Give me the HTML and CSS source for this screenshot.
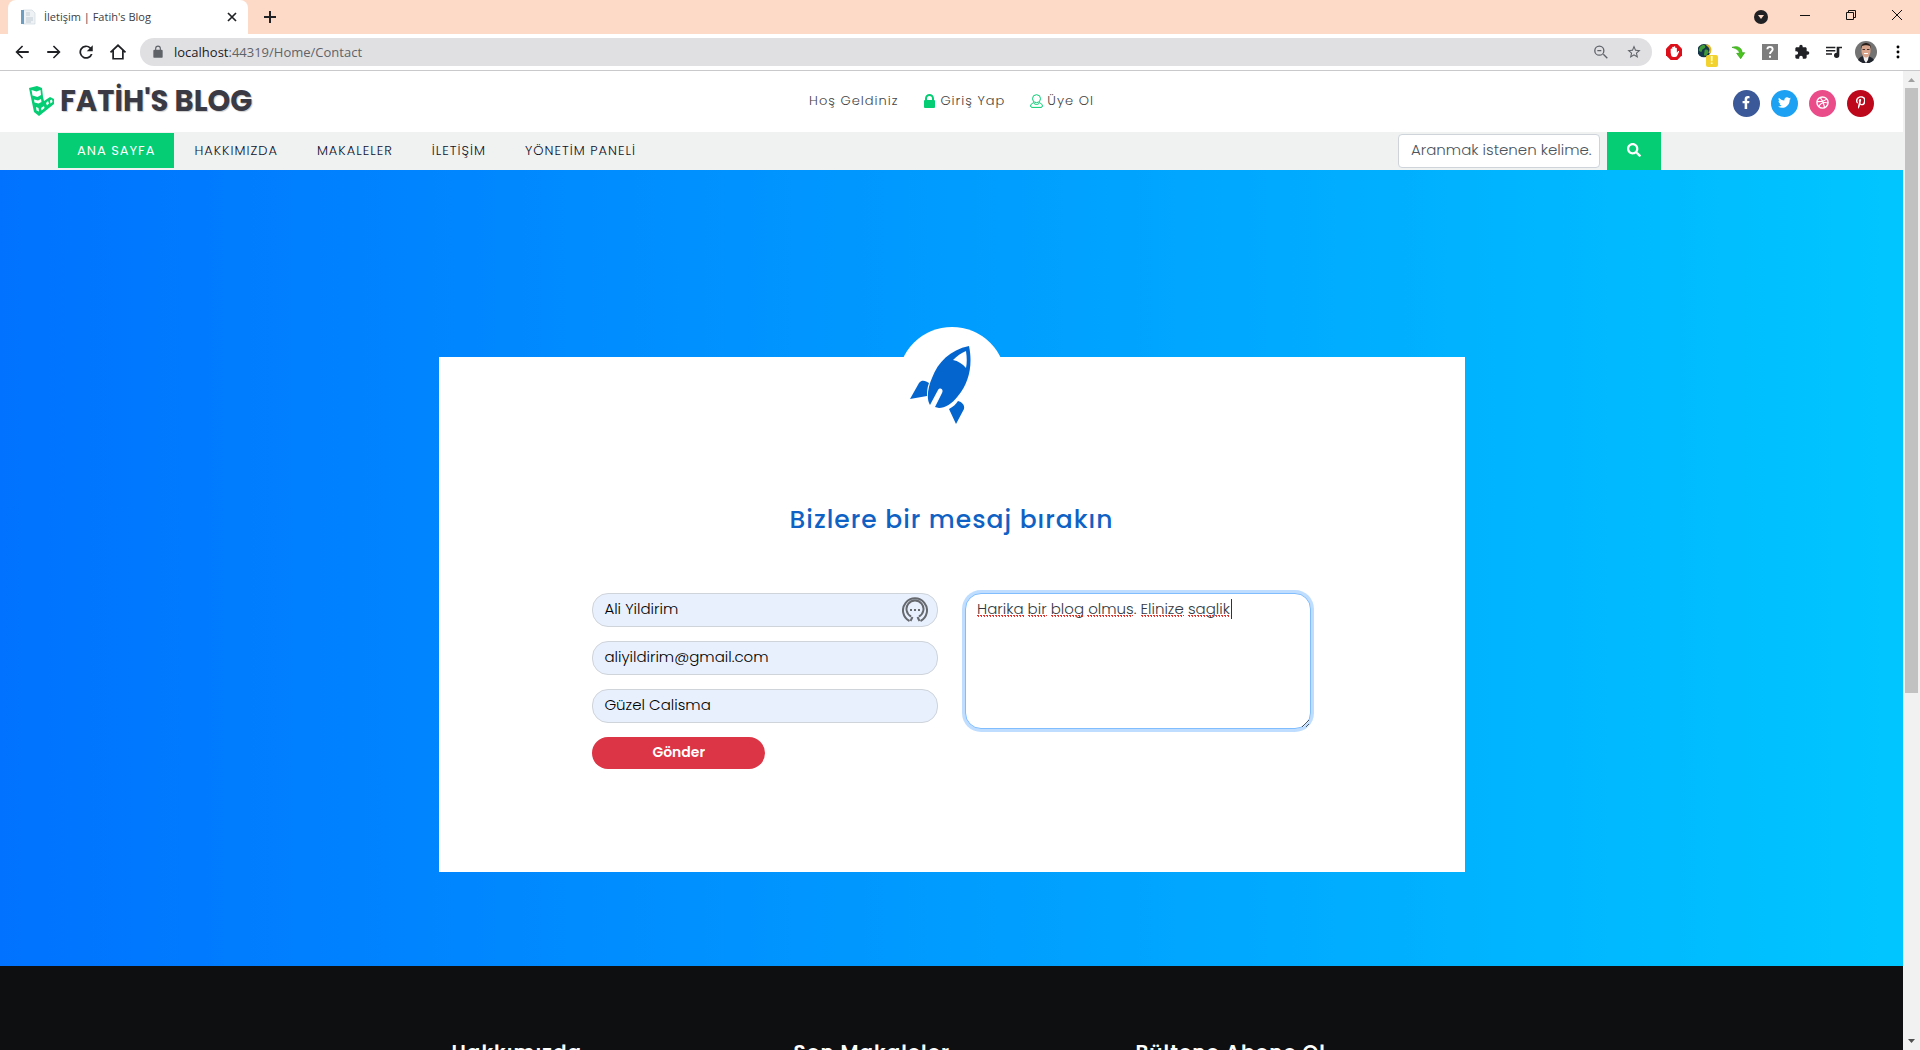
FILE: index.html
```html
<!DOCTYPE html>
<html lang="tr">
<head>
<meta charset="utf-8">
<meta name="viewport" content="width=device-width, initial-scale=1">
<title>İletişim | Fatih's Blog</title>
<link rel="stylesheet" href="styles.css">
</head>
<body class="window">
<div class="tabstrip">
  <div class="tab">
    <svg class="tab-icon" viewBox="0 0 16 16"><path d="M3 1h9l3 3v11H3z" fill="#eef2f5" stroke="#c9d3da" stroke-width=".6"/><path d="M1 1h3v14H1z" fill="#6d9dc0"/><path d="M6 4h4M6 6h4M6 9h7M6 11h7M6 13h5" stroke="#b4c1ca" stroke-width=".8"/></svg>
    <span class="tab-title">İletişim | Fatih's Blog</span>
    <button class="icon-btn tab-close" aria-label="Sekmeyi kapat"><svg viewBox="0 0 10 10"><path d="M1 1l8 8M9 1L1 9" stroke="#202124" stroke-width="1.7"/></svg></button>
  </div>
  <button class="icon-btn new-tab" aria-label="Yeni sekme"><svg viewBox="0 0 12 12"><path d="M6 0v12M0 6h12" stroke="#202124" stroke-width="2"/></svg></button>
  <div class="window-controls">
    <button class="icon-btn tab-search" aria-label="Sekmelerde ara"><svg viewBox="0 0 14 14"><circle cx="7" cy="7" r="7" fill="#202124"/><path d="M4 5h6L7 9z" fill="#fcdac7"/></svg></button>
    <button class="icon-btn control" aria-label="Küçült"><svg viewBox="0 0 10 10"><path d="M0 5.5h10" stroke="#111"/></svg></button>
    <button class="icon-btn control" aria-label="Geri yükle"><svg viewBox="0 0 10 10"><path d="M.5 2.500h7v7h-7zM2.500 2.500v-2h7v7h-2" fill="none" stroke="#111"/></svg></button>
    <button class="icon-btn control" aria-label="Kapat"><svg viewBox="0 0 10 10"><path d="M0 0l10 10M10 0L0 10" stroke="#111"/></svg></button>
  </div>
</div>
<div class="toolbar">
  <div class="tools nav-tools">
    <button class="icon-btn tool" aria-label="Geri"><svg viewBox="0 0 24 24"><path d="M21 10.800H7.500l6-6L12 3.200 3.200 12l8.800 8.800 1.500-1.600-6-6H21z" fill="#202124"/></svg></button>
    <button class="icon-btn tool" aria-label="İleri"><svg viewBox="0 0 24 24"><path d="M3 10.800h13.500l-6-6L12 3.200l8.800 8.800-8.800 8.800-1.500-1.600 6-6H3z" fill="#202124"/></svg></button>
    <button class="icon-btn tool" aria-label="Yenile"><svg viewBox="0 0 24 24"><path d="M18.300 5.700A8.900 8.900 0 1 0 20.700 14.500h-2.400A6.600 6.600 0 1 1 16.700 7.300L13 11h8V3z" fill="#202124"/></svg></button>
    <button class="icon-btn tool" aria-label="Ana sayfa"><svg viewBox="0 0 24 24"><path d="M2 12.500L12 3l10 9.500M5.500 10v11h13V10" fill="none" stroke="#202124" stroke-width="2.300"/></svg></button>
  </div>
  <div class="omnibox">
    <svg class="lock" viewBox="0 0 24 24"><path d="M18 8h-1V6A5 5 0 0 0 7 6v2H6a2 2 0 0 0-2 2v10a2 2 0 0 0 2 2h12a2 2 0 0 0 2-2V10a2 2 0 0 0-2-2zM9 8V6a3 3 0 0 1 6 0v2z" fill="#5f6368"/></svg>
    <span class="url"><span class="url-host">localhost</span>:44319/Home/Contact</span>
    <button class="icon-btn tool" aria-label="Uzaklaştır"><svg viewBox="0 0 24 24"><path d="M15.500 15.500l6 6M6.500 10h6" stroke="#5f6368" stroke-width="2"/><circle cx="9.500" cy="10" r="6.800" fill="none" stroke="#5f6368" stroke-width="2"/></svg></button>
    <button class="icon-btn tool" aria-label="Yer işareti ekle"><svg viewBox="0 0 24 24"><path d="M22 9.240l-7.190-.62L12 2 9.190 8.630 2 9.240l5.460 4.730L5.820 21 12 17.270 18.180 21l-1.630-7.030zM12 15.400l-3.760 2.270 1-4.280-3.320-2.880 4.380-.38L12 6.100l1.710 4.040 4.380.38-3.320 2.880 1 4.280z" fill="#5f6368"/></svg></button>
  </div>
  <div class="tools">
    <button class="icon-btn tool" aria-label="Reklam engelleyici"><svg viewBox="0 0 24 24"><path d="M7 0h10l7 7v10l-7 7H7l-7-7V7z" fill="#dc0f1a"/><path d="M7 13V7.500a1.200 1.200 0 0 1 2.300 0V11V5a1.200 1.200 0 0 1 2.300 0v5V4.500a1.200 1.200 0 0 1 2.400 0V11V6.500a1.200 1.200 0 0 1 2.300 0V13l1.700-2c1-.8 2 0 1.500 1l-3 6c-1 2-7 2.500-8.500-.5z" fill="#fff"/></svg></button>
    <button class="icon-btn tool globe" aria-label="İndirme yöneticisi"><svg viewBox="0 0 24 24"><circle cx="9" cy="10" r="10" fill="#15364a"/><path d="M3 4c4-4 8-3 8 0s-5 3-5 6-4 2-5-1zM10 9c4-2 7 1 5 5s-5 5-6 2z" fill="#3f9a38"/><path d="M13 1c6 3 7 8 4 13" fill="none" stroke="#e0b826" stroke-width="3"/></svg><span class="badge">!</span></button>
    <button class="icon-btn tool" aria-label="İndir"><svg viewBox="0 0 24 24"><path d="M3 5c9-3 15 1 15 8h4l-6 9-6-8h4c0-4-4-7-11-9z" fill="#4bc51d" stroke="#2d9d16"/></svg></button>
    <button class="icon-btn tool" aria-label="Yardım"><svg viewBox="0 0 24 24"><path d="M0 0h24v24H0z" fill="#7d7d7d"/><path d="M8 8c0-5 8-5 8 0 0 3.500-4 3-4 7" fill="none" stroke="#fff" stroke-width="2.800"/><path d="M10.500 17.500h3v3h-3z" fill="#fff"/></svg></button>
    <button class="icon-btn tool" aria-label="Uzantılar"><svg viewBox="0 0 24 24"><path d="M20.500 11H19V7c0-1.100-.9-2-2-2h-4V3.500a2.500 2.500 0 0 0-5 0V5H4c-1.100 0-2 .9-2 2v3.800h1.500a2.700 2.700 0 0 1 0 5.400H2V20c0 1.100.9 2 2 2h3.800v-1.500a2.700 2.700 0 0 1 5.400 0V22H17c1.100 0 2-.9 2-2v-4h1.500a2.500 2.500 0 0 0 0-5z" fill="#202124"/></svg></button>
    <button class="icon-btn tool" aria-label="Medya"><svg viewBox="0 0 24 24"><path d="M0 4h14v2.300H0zM0 9h14v2.300H0zM0 14h9v2.300H0zM16 4h8v2.500h-4V17a4 4 0 1 1-4-4z" fill="#202124"/></svg></button>
    <button class="icon-btn tool avatar" aria-label="Profil"><svg viewBox="0 0 22 22"><circle cx="11" cy="11" r="11" fill="#737373"/><path d="M3 19c2-4 5-4 8-4s6 1 8 4a11 11 0 0 1-16 0z" fill="#20242c"/><path d="M8 14h6l-1 5-2 3-2-3z" fill="#f3f1f0"/><path d="M6.500 6c0-5 9-5 9 0v4c0 4-2.500 6.500-4.500 6.500S6.500 14 6.500 10z" fill="#d9a68d"/><path d="M6 8c-1-8 11-8 10 0l-1-3c-2-1-6-1-8 0z" fill="#29201c"/><path d="M7.500 8.500H10M12 8.500h2.500" stroke="#4a302a"/><path d="M9 12.500h4" stroke="#fff"/></svg></button>
    <button class="icon-btn tool" aria-label="Menü"><svg viewBox="0 0 24 24"><circle cx="12" cy="4.500" r="2.200"/><circle cx="12" cy="12" r="2.200"/><circle cx="12" cy="19.500" r="2.200"/></svg></button>
  </div>
</div>
<div class="viewport">
  <div class="page">
    <header class="site-header">
      <a class="logo" href="#">
        <svg class="logo-icon" viewBox="0 0 26 30"><path d="M0 2l8-2 5 2 1 9 1 4 6-4 4 2v5L10 30l-5-4z" fill="#04cd73"/><path d="M2.500 4l5 1.500 4-1.500.5 5-3.500 2-5-1.500zM5 13.500l4 1 3-1.500.5 3-3 1.500-4-1zM17 17l2-2 1 2.500-2 2zM21 14.500l2-1 .5 2.500-2 1.500zM12 22l3-2 .5 2-3 2.500zM7 21l2.500 1 .5 3.500-2.500-1z" fill="#fff"/></svg>
        <span class="logo-text">FATİH'S BLOG</span>
      </a>
      <div class="account">
        <span>Hoş Geldiniz</span>
        <a class="account-link" href="#"><svg class="account-icon" viewBox="0 0 13 14"><path d="M3 6V4.500a3.500 3.500 0 0 1 7 0V6" fill="none" stroke="#04cd73" stroke-width="2"/><rect x="1" y="6" width="11" height="8" rx="1" fill="#04cd73"/></svg>Giriş Yap</a>
        <a class="account-link" href="#"><svg class="account-icon" viewBox="0 0 13 14"><path d="M4 8.500C1 10 .6 10.500.6 12c0 .9.600 1.400 1.400 1.400h9c.8 0 1.400-.5 1.400-1.400 0-1.500-.4-2-3.400-3.500M4 9.500c1.500 1.300 3.500 1.300 5 0" fill="none" stroke="#04cd73"/><circle cx="6.500" cy="4.700" r="4" fill="none" stroke="#04cd73"/></svg>Üye Ol</a>
      </div>
      <div class="social">
        <a class="social-link facebook" href="#" aria-label="Facebook"><svg viewBox="0 0 320 512"><path d="M279.140 288l14.220-92.660h-88.910v-60.130c0-25.350 12.420-50.060 52.240-50.060h40.420V6.260S260.430 0 225.360 0c-73.220 0-121.080 44.380-121.080 124.720v70.620H22.890V288h81.390v224h100.170V288z"/></svg></a>
        <a class="social-link twitter" href="#" aria-label="Twitter"><svg viewBox="0 0 512 512"><path d="M459.370 151.716c.325 4.548.325 9.097.325 13.645 0 138.720-105.583 298.558-298.558 298.558-59.452 0-114.680-17.219-161.137-47.106 8.447.974 16.568 1.299 25.340 1.299 49.055 0 94.213-16.568 130.274-44.832-46.132-.975-84.792-31.188-98.112-72.772 6.498.974 12.995 1.624 19.818 1.624 9.421 0 18.843-1.300 27.614-3.573-48.081-9.747-84.143-51.980-84.143-102.985v-1.299c13.969 7.797 30.214 12.670 47.431 13.319-28.264-18.843-46.781-51.005-46.781-87.391 0-19.492 5.197-37.360 14.294-52.954 51.655 63.675 129.300 105.258 216.365 109.807-1.624-7.797-2.599-15.918-2.599-24.040 0-57.828 46.782-104.934 104.934-104.934 30.213 0 57.502 12.670 76.670 33.137 23.715-4.548 46.456-13.320 66.599-25.340-7.798 24.366-24.366 44.833-46.132 57.827 21.117-2.273 41.584-8.122 60.426-16.243-14.292 20.791-32.161 39.308-52.628 54.253z"/></svg></a>
        <a class="social-link dribbble" href="#" aria-label="Dribbble"><svg viewBox="0 0 14 14"><path d="M4.500 1.500c2.500 3 4 6.500 4.800 11M1 6c4 .3 8-.5 10.500-3M2.700 11.500C5 7.500 9 6.300 13 7.500" fill="none" stroke="#fff" stroke-width="1.200"/><circle cx="7" cy="7" r="6" fill="none" stroke="#fff" stroke-width="1.500"/></svg></a>
        <a class="social-link pinterest" href="#" aria-label="Pinterest"><svg viewBox="0 0 384 512"><path d="M204 6.500C101.400 6.500 0 74.900 0 185.600 0 256 39.600 296 63.600 296c9.900 0 15.600-27.600 15.600-35.400 0-9.300-23.700-29.100-23.700-67.800 0-80.400 61.200-137.400 140.400-137.400 68.100 0 118.500 38.700 118.500 109.800 0 53.100-21.300 152.700-90.300 152.700-24.900 0-46.200-18-46.200-43.800 0-37.800 26.400-74.400 26.400-113.400 0-66.200-93.900-54.200-93.900 25.800 0 16.800 2.100 35.400 9.600 50.700-13.800 59.400-42 147.900-42 209.100 0 18.900 2.700 37.500 4.500 56.400 3.400 3.800 1.700 3.400 6.900 1.500 50.400-69 48.600-82.500 71.400-172.800 12.300 23.400 44.100 36 69.300 36 106.200 0 153.900-103.500 153.900-196.800C384 71.300 298.200 6.500 204 6.500z"/></svg></a>
      </div>
    </header>
    <nav class="site-nav">
      <div class="menu">
        <a class="menu-link active" href="#">ANA SAYFA</a>
        <a class="menu-link" href="#">HAKKIMIZDA</a>
        <a class="menu-link" href="#">MAKALELER</a>
        <a class="menu-link" href="#">İLETİŞİM</a>
        <a class="menu-link" href="#">YÖNETİM PANELİ</a>
      </div>
      <form class="search">
        <input class="search-input" type="text" placeholder="Aranmak istenen kelime.." aria-label="Ara">
        <button class="search-btn" type="button" aria-label="Ara"><svg viewBox="0 0 512 512"><path d="M505 442.700L405.300 343c-4.500-4.500-10.600-7-17-7H372c27.600-35.300 44-79.700 44-128C416 93.100 322.900 0 208 0S0 93.100 0 208s93.100 208 208 208c48.300 0 92.700-16.400 128-44v16.300c0 6.400 2.500 12.500 7 17l99.700 99.700c9.400 9.400 24.600 9.400 33.900 0l28.300-28.300c9.400-9.400 9.400-24.600.1-34zM208 336c-70.700 0-128-57.200-128-128 0-70.700 57.200-128 128-128 70.700 0 128 57.200 128 128 0 70.700-57.200 128-128 128z" fill="#fff"/></svg></button>
      </form>
    </nav>
    <main class="hero">
      <section class="card">
        <div class="rocket-disc"><svg class="rocket" viewBox="0 0 62 78"><path d="M59 0c4 19 0 37-11 50-6 8-13 12-19 12l-4-1 7-14c2-4-2-6-4-3l-8 15c-4-6-2-18 2-27C28 16 40 4 59 0z" fill="#0565cf"/><path d="M56 5c1 7 1 12 0 17-3-4-8-7-13-8 4-4 8-7 13-9z" fill="#fff"/><path d="M0 53l9-16c3-4 7-2 10 0-2 5-2 9-2 13zM39 63c4-2 7-5 9-8 4 1 7 4 6 8l-8 15z" fill="#0565cf"/></svg></div>
        <h1 class="card-title">Bizlere bir mesaj bırakın</h1>
        <form class="contact-form">
          <div class="fields">
            <div class="field">
              <input class="control-box" type="text" value="Ali Yildirim" aria-label="Ad Soyad">
              <svg class="pass-icon" viewBox="0 0 26 26"><path d="M7.500 24a12 12 0 1 1 11 0M9 19.500a8.500 8.500 0 1 1 8 0" fill="none" stroke="#66696e" stroke-width="2"/><path d="M8.500 24l2-4M17.500 24l-2-4" stroke="#66696e" stroke-width="2"/><path d="M8 13h2M12 13h2M16 13h2" stroke="#66696e" stroke-width="2"/></svg>
            </div>
            <input class="control-box" type="email" value="aliyildirim@gmail.com" aria-label="E-posta">
            <input class="control-box" type="text" value="Güzel Calisma" aria-label="Konu">
            <button class="send-btn" type="button">Gönder</button>
          </div>
          <div class="message">
            <textarea class="control-box message-box" aria-label="Mesaj" spellcheck="false">Harika bir blog olmus. Elinize saglik</textarea>
            <svg class="proof-marks" viewBox="0 0 260 24"><path d="M0 18.500h47M51 18.500h19M74 18.500h32M110 18.500h46M164 18.500h43M211 18.500h42" stroke="#e0362f" stroke-width="1" stroke-dasharray="2 1" fill="none"/><path d="M1 19.500h46M52 19.500h18M75 19.500h31M111 19.500h45M165 19.500h42M212 19.500h41" stroke="#e0362f" stroke-width="1" stroke-dasharray="1 2" fill="none"/><path d="M254.500 2v20" stroke="#333"/></svg>
          </div>
        </form>
      </section>
    </main>
    <footer class="site-footer">
      <h2 class="footer-title">Hakkımızda</h2>
      <h2 class="footer-title">Son Makaleler</h2>
      <h2 class="footer-title">Bültene Abone Ol</h2>
    </footer>
  </div>
  <div class="scrollbar">
    <svg class="scroll-arrow" viewBox="0 0 17 17"><path d="M5 11h7L8.500 7z" fill="#a0a0a0"/></svg>
    <div class="scroll-track"><div class="scroll-thumb"></div></div>
    <svg class="scroll-arrow" viewBox="0 0 17 17"><path d="M5 6h7l-3.500 4z" fill="#505050"/></svg>
  </div>
</div>
</body>
</html>
```

FILE: styles.css
```css
* { box-sizing: border-box; }
.window {
  margin: 0;
  height: 100vh;
  display: flex;
  flex-direction: column;
  overflow: hidden;
  font-family: Poppins, Inter, sans-serif;
  font-size: 15px;
  font-weight: 300;
  color: #495057;
}
a { color: inherit; text-decoration: none; }
svg { display: block; }
.icon-btn {
  display: grid;
  place-items: center;
  padding: 0;
  border: 0;
  background: none;
}

/* Browser frame */
.tabstrip {
  display: flex;
  align-items: center;
  flex: none;
  height: 34px;
  padding-left: 8px;
  background: #fcdac7;
}
.tab {
  display: flex;
  align-items: center;
  gap: 8px;
  width: 240px;
  height: 34px;
  padding: 0 10px 0 12px;
  border-radius: 8px 8px 0 0;
  background: #fff;
}
.tab-icon { width: 16px; height: 16px; }
.tab-title {
  flex: 1;
  font: 11px/16px "Open Sans", sans-serif;
  color: #3c4043;
}
.tab-close svg { width: 10px; height: 10px; }
.tab-close { width: 12px; height: 16px; }
.new-tab { width: 44px; height: 34px; }
.new-tab svg { width: 12px; height: 12px; }
.window-controls {
  display: flex;
  align-items: center;
  height: 34px;
  margin-left: auto;
}
.tab-search { margin-right: 14px; }
.tab-search svg { width: 14px; height: 14px; }
.control { align-self: flex-start; width: 46px; height: 30px; }
.control svg { width: 10px; height: 10px; }
.toolbar {
  display: flex;
  align-items: center;
  gap: 10px;
  flex: none;
  height: 37px;
  padding: 0 10px;
  border-bottom: 1px solid #c9c9cb;
  background: #fff;
}
.tools { display: flex; gap: 8px; }
.tool { width: 24px; height: 24px; }
.tool svg { width: 16px; height: 16px; }
.nav-tools svg { width: 18px; height: 18px; }
.avatar svg { width: 22px; height: 22px; }
.globe { position: relative; }
.badge {
  position: absolute;
  right: 0;
  bottom: -3px;
  width: 12px;
  height: 12px;
  border-radius: 2px;
  background: #f2d22e;
  color: #fff;
  font: bold 10px/12px "Liberation Sans", sans-serif;
}
.omnibox {
  display: flex;
  align-items: center;
  gap: 9px;
  flex: 1;
  height: 28px;
  padding: 0 6px 0 11px;
  border-radius: 14px;
  background: #e0e0e3;
}
.lock { width: 14px; height: 14px; }
.url {
  flex: 1;
  font: 13px/20px "Open Sans", sans-serif;
  color: #5f6368;
}
.url-host { color: #202124; }

/* Page area */
.viewport { display: flex; flex: 1; min-height: 0; }
.page { flex: 1; overflow: hidden; background: #0e0f11; }
.scrollbar {
  display: flex;
  flex-direction: column;
  width: 17px;
  background: #f1f1f1;
}
.scroll-arrow { width: 17px; height: 17px; }
.scroll-track { flex: 1; padding: 0 2px; }
.scroll-thumb { height: 64%; background: #c1c1c1; }

.site-header {
  display: grid;
  grid-template-columns: 1fr auto 1fr;
  align-items: center;
  height: 61px;
  padding: 0 29px;
  background: #fff;
}
.logo { display: flex; align-items: center; gap: 5px; padding-bottom: 2px; }
.logo-icon { width: 26px; height: 30px; }
.logo-text {
  font-size: 29px;
  line-height: 36px;
  font-weight: 700;
  color: #3a3a45;
  text-shadow: 1px 1px 1px #ccc;
}
.account {
  display: flex;
  gap: 25px;
  padding-bottom: 2px;
  font-size: 13px;
  line-height: 20px;
  letter-spacing: 1px;
  color: #444;
}
.account-link { display: flex; align-items: center; gap: 4px; }
.account-icon { width: 13px; height: 14px; }
.social {
  display: flex;
  justify-content: flex-end;
  gap: 11px;
  padding-top: 4px;
}
.social-link {
  display: grid;
  place-items: center;
  width: 27px;
  height: 27px;
  padding-bottom: 2px;
  border-radius: 50%;
}
.social-link svg { height: 13px; fill: #fff; }
.facebook { background: #3b5998; }
.twitter { background: #1da1f2; }
.dribbble { background: #ea4c89; }
.pinterest { background: #bd081c; }

.site-nav {
  display: flex;
  justify-content: space-between;
  height: 38px;
  padding: 0 242px 0 58px;
  background: #eff2f1;
}
.menu { display: flex; align-items: flex-start; gap: 1px; padding-top: 1px; }
.menu-link {
  padding: 0 19px;
  font-size: 13px;
  line-height: 35px;
  letter-spacing: 1px;
  color: #11112a;
}
.menu-link.active { background: #04cd73; color: #fff; font-weight: 400; }
.search { display: flex; align-items: center; gap: 7px; }
.search-input {
  width: 202px;
  height: 34px;
  padding: 0 7px 4px 12px;
  border: 1px solid #ced4da;
  border-radius: 4px;
  background: #fff;
  font: inherit;
}
.search-input::placeholder { color: #4c555d; opacity: 1; }
.search-btn {
  display: grid;
  place-items: center;
  width: 54px;
  height: 38px;
  padding: 0 0 2px;
  border: 0;
  background: #04cd73;
}
.search-btn svg { width: 14px; height: 14px; }

.hero {
  padding: 187px 24px 94px;
  background: linear-gradient(to right, #0072ff, #00c6ff);
}
.card {
  display: flow-root;
  max-width: 1026px;
  margin: 0 auto;
  padding-bottom: 103px;
  background: #fff;
}
.rocket-disc {
  display: grid;
  place-items: center;
  width: 108px;
  height: 108px;
  margin: -30px auto 0;
  padding: 8px 22px 0 0;
  border-radius: 50%;
  background: #fff;
}
.rocket { width: 62px; height: 78px; }
.card-title {
  margin: 69px 0 0;
  font-size: 25px;
  line-height: 32px;
  font-weight: 500;
  letter-spacing: 1px;
  text-align: center;
  color: #0f62c4;
}
.contact-form {
  display: grid;
  grid-template-columns: 1fr 1fr;
  gap: 27px;
  padding: 57px 15% 0;
}
.fields { display: flex; flex-direction: column; gap: 14px; }
.field, .message { position: relative; }
.control-box {
  display: block;
  width: 100%;
  height: 34px;
  padding: 0 11px 4px;
  border: 1px solid #ced4da;
  border-radius: 16px;
  background: #e8f0fe;
  font: inherit;
  line-height: 20px;
  color: #000;
}
.pass-icon {
  position: absolute;
  right: 10px;
  top: 4px;
  width: 26px;
  height: 26px;
}
.send-btn {
  width: 50%;
  height: 32px;
  padding: 0 0 2px;
  border: 0;
  border-radius: 16px;
  background: #dc3545;
  color: #fff;
  font: inherit;
  font-size: 14px;
  font-weight: 600;
}
.message-box {
  height: 136px;
  padding: 5px 11px;
  border-color: #80bdff;
  box-shadow: 0 0 0 3px #bfdeff;
  background: #fff;
  color: #343a40;
  resize: vertical;
}
.proof-marks {
  position: absolute;
  left: 12px;
  top: 4px;
  width: 260px;
  height: 24px;
}
.site-footer {
  display: grid;
  grid-template-columns: repeat(3, 1fr);
  max-width: 1026px;
  margin: 0 auto;
  padding: 70px 0 40px;
}
.footer-title {
  margin: 0;
  padding-left: 13px;
  font-size: 20px;
  line-height: 32px;
  font-weight: 600;
  letter-spacing: 1px;
  color: #fff;
}
```
